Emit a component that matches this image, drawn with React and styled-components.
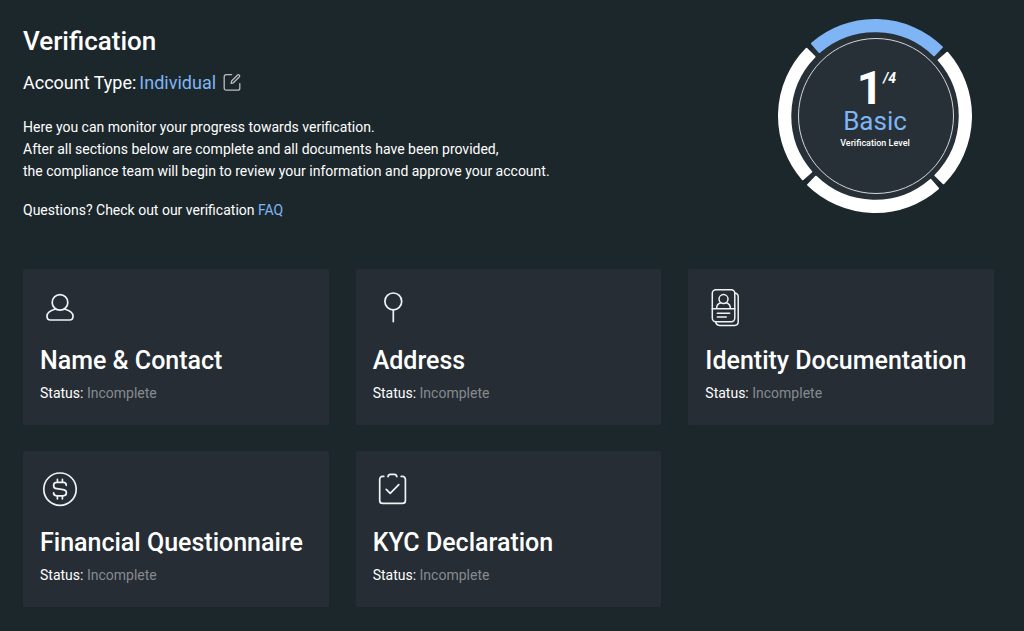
import React from "react";
import styled, { createGlobalStyle } from "styled-components";

const GlobalStyle = createGlobalStyle`
  * {
    box-sizing: border-box;
  }

  body {
    margin: 0;
    background-color: #1c272c;
    color: #ffffff;
    font-family: Roboto, "Liberation Sans", sans-serif;
    font-size: 14px;
  }
`;

const Page = styled.main`
  padding: 19px 30px 24px 23px;
`;

const Header = styled.header`
  display: flex;
  justify-content: space-between;
  align-items: flex-start;
  gap: 24px;
  padding-right: 22px;
  margin-bottom: 31px;
`;

const Title = styled.h1`
  margin: 4px 0 14px;
  font-size: 26px;
  line-height: 36px;
  font-weight: 500;
`;

const AccountType = styled.div`
  display: flex;
  align-items: center;
  font-size: 18px;
  line-height: 20px;
  margin-bottom: 23px;
`;

const AccountValue = styled.span`
  color: #7fb5f5;
  margin-left: 3px;
`;

const EditButton = styled.button`
  display: flex;
  padding: 0;
  margin-left: 6px;
  border: none;
  background: transparent;
  color: #b9bdc0;
  cursor: pointer;
`;

const Text = styled.p`
  margin: 0 0 17px;
  line-height: 22px;
`;

const Link = styled.a`
  color: #7fb5f5;
  text-decoration: none;
`;

const Level = styled.div`
  display: grid;
  flex-shrink: 0;
  place-items: center;

  > * {
    grid-area: 1 / 1;
  }
`;

const LevelInfo = styled.div`
  display: flex;
  flex-direction: column;
  align-items: center;
  padding-bottom: 12px;
`;

const LevelCount = styled.div`
  display: flex;
  align-items: flex-start;
  padding-left: 3px;
  font-size: 46px;
  line-height: 36px;
  font-weight: 700;
`;

const LevelTotal = styled.span`
  font-size: 14px;
  line-height: 16px;
  font-style: italic;
`;

const LevelName = styled.div`
  font-size: 26px;
  line-height: 30px;
  color: #7fb5f5;
`;

const LevelLabel = styled.div`
  font-size: 9px;
  line-height: 14px;
  font-weight: 500;
`;

const Cards = styled.section`
  display: grid;
  grid-template-columns: repeat(3, 1fr);
  gap: 26px 27px;
`;

const Card = styled.a`
  display: block;
  padding: 19px 17px 22px;
  border-radius: 2px;
  background-color: #262d34;
  color: inherit;
  text-decoration: none;
`;

const CardIcon = styled.svg`
  display: block;
  width: 40px;
  height: 40px;
  fill: none;
  stroke: #f1f2f3;
  stroke-width: ${({ $thin }) => ($thin ? "1.5" : "1.7")};
  stroke-linecap: round;
  stroke-linejoin: round;
`;

const CardTitle = styled.h2`
  margin: 17px 0 6px;
  font-size: 25px;
  line-height: 32px;
  font-weight: 500;
  white-space: nowrap;
`;

const Status = styled.div`
  line-height: 20px;
`;

const StatusValue = styled.span`
  color: #868b8f;
`;

const EditIcon = () => (
  <svg width="20" height="20" viewBox="0 0 20 20" fill="none" stroke="currentColor" strokeWidth="1.3" strokeLinecap="round" strokeLinejoin="round">
    <path d="M9.6 1.700H4.200a2 2 0 0 0-2 2v11.500a2 2 0 0 0 2 2h11.600a2 2 0 0 0 2-2v-4.600" />
    <path d="M9.100 10.300l.5-2.300 6-6a1.100 1.100 0 0 1 1.500 0l.3.3a1.100 1.100 0 0 1 0 1.500l-6 6z" />
  </svg>
);

const icons = {
  person: (
    <>
      <circle cx="20" cy="14.4" r="7.8" />
      <path d="M15.5 21c-4.6 1.3-8.5 3-8.5 7v.6c0 2 1.4 3.4 3.4 3.4h19.2c2 0 3.4-1.4 3.4-3.4V28c0-4-3.9-5.700-8.500-7" />
    </>
  ),
  pin: (
    <>
      <circle cx="20.300" cy="13.400" r="8.400" />
      <path d="M20.300 22v11.600" />
    </>
  ),
  documents: (
    <>
      <rect x="7.300" y="1.700" width="22.500" height="32" rx="3.600" />
      <path d="M29.800 5c2 .3 3.400 1.600 3.400 3.600v25.200c0 2.200-1.400 3.600-3.600 3.600H14.400c-2 0-3.400-1.300-3.700-3.700" />
      <circle cx="18.500" cy="11.100" r="4.500" />
      <path d="M15.700 14.700c-2.500.7-4.100 2.700-4.100 5.900M21.300 14.700c2.500.7 4.100 2.700 4.100 5.900M7.300 20.700h22.500M12.300 25.300h12.400M12.300 29.100h9" />
    </>
  ),
  dollar: (
    <>
      <circle cx="20" cy="19.200" r="16.200" />
      <path d="M26.300 15.300c0-1.900-1.200-3-3-3h-6.600c-1.900 0-3.100 1.300-3.100 3.100 0 2.200 1.300 3.100 3.200 3.300l6.400.9c1.900.3 3.200 1.300 3.200 3.200 0 2-1.300 3-3.200 3h-6.500c-1.900 0-3.100-1.200-3.100-3M17.400 9.400v2.900M22.400 9.400v2.900M17.400 25.900v2.900M22.400 25.900v2.900" />
    </>
  ),
  clipboard: (
    <>
      <path d="M10.800 6.400H9.700c-1.900 0-3 1.200-3 3v21c0 1.900 1.100 3 3 3h19.700c1.900 0 3-1.100 3-3v-21c0-1.800-1.100-3-3-3h-1.200" />
      <path d="M15 6.600c.3-1.500 1-2.200 2.400-2.200h4c1.400 0 2.100.7 2.400 2.200" />
      <path d="M13.200 19.300l4 4 8.600-8.600" />
    </>
  ),
};

const cards = [
  { title: "Name & Contact", icon: "person", status: "Incomplete" },
  { title: "Address", icon: "pin", status: "Incomplete" },
  { title: "Identity Documentation", icon: "documents", status: "Incomplete", thin: true },
  { title: "Financial Questionnaire", icon: "dollar", status: "Incomplete" },
  { title: "KYC Declaration", icon: "clipboard", status: "Incomplete" },
];

// start and end angle of every step, clockwise from the top
const steps = [
  [-41, 44.2],
  [48.8, 134.5],
  [139, 224.2],
  [228.8, 314.4],
];

const point = (radius, angle) => {
  const rad = (angle * Math.PI) / 180;
  return `${97 + radius * Math.sin(rad)} ${97 - radius * Math.cos(rad)}`;
};

const stepPath = ([start, end]) =>
  `M${point(96, start)}A96 96 0 0 1 ${point(96, end)}L${point(84.7, end)}A84.7 84.7 0 0 0 ${point(84.7, start)}Z`;

const LevelRing = ({ level }) => (
  <svg width="194" height="194" viewBox="0 0 194 194">
    <circle cx="97" cy="97" r="92" fill="#263036" />
    {steps.map((step, i) => (
      <path
        key={i}
        d={stepPath(step)}
        fill={i < level ? "#7fb5f5" : "#ffffff"}
        stroke={i < level ? "#7fb5f5" : "#ffffff"}
        strokeWidth="2"
        strokeLinejoin="round"
      />
    ))}
    <circle cx="98" cy="97" r="77.5" fill="none" stroke="#d5d7d9" strokeWidth="1" />
  </svg>
);

const App = () => {
  return (
    <>
      <GlobalStyle />
      <Page>
        <Header>
          <div>
            <Title>Verification</Title>
            <AccountType>
              Account Type: <AccountValue>Individual</AccountValue>
              <EditButton type="button" aria-label="Edit account type">
                <EditIcon />
              </EditButton>
            </AccountType>
            <Text>
              Here you can monitor your progress towards verification.
              <br />
              After all sections below are complete and all documents have been provided,
              <br />
              the compliance team will begin to review your information and approve your account.
            </Text>
            <Text>
              Questions? Check out our verification <Link href="#faq">FAQ</Link>
            </Text>
          </div>
          <Level>
            <LevelRing level={1} />
            <LevelInfo>
              <LevelCount>
                1<LevelTotal>/4</LevelTotal>
              </LevelCount>
              <LevelName>Basic</LevelName>
              <LevelLabel>Verification Level</LevelLabel>
            </LevelInfo>
          </Level>
        </Header>
        <Cards>
          {cards.map((card) => (
            <Card key={card.title} href={`#${card.icon}`}>
              <CardIcon viewBox="0 0 40 40" $thin={card.thin}>
                {icons[card.icon]}
              </CardIcon>
              <CardTitle>{card.title}</CardTitle>
              <Status>
                Status: <StatusValue>{card.status}</StatusValue>
              </Status>
            </Card>
          ))}
        </Cards>
      </Page>
    </>
  );
};

export default App;
